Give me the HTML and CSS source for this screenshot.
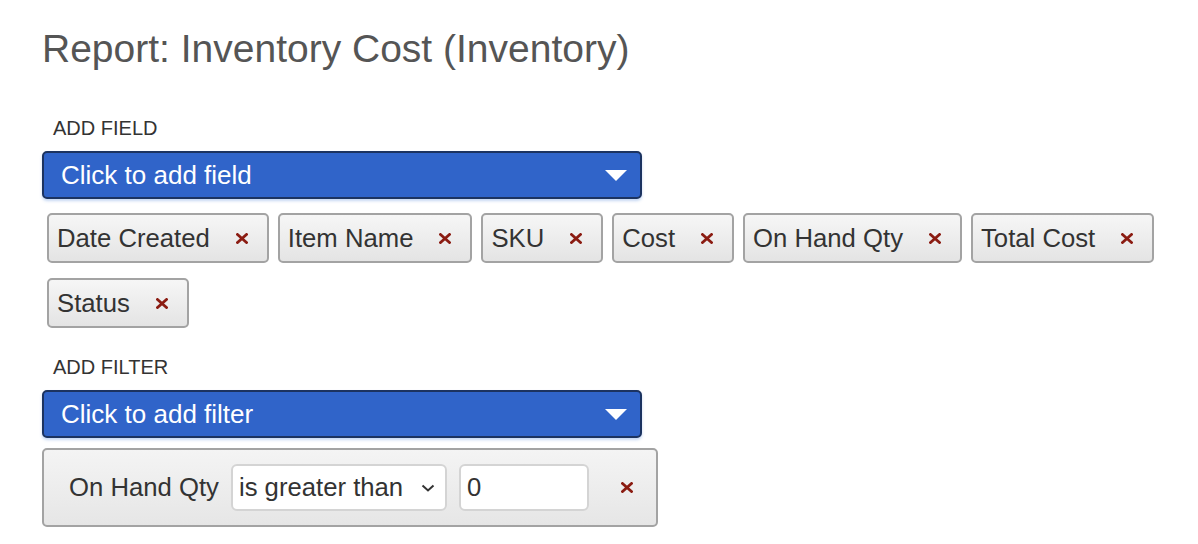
FILE: index.html
```html
<!DOCTYPE html>
<html>
	<head>
		<link rel="stylesheet" href="styles.css">
	</head>
	<body>
		<div class="report">
			<h1 class="title">Report: Inventory Cost (Inventory)</h1>

			<div class="label">ADD FIELD</div>
			<div class="picker">
				<span>Click to add field</span>
				<span class="caret"></span>
			</div>

			<div class="chips">
				<div class="chip">Date Created<svg class="remove" viewBox="0 0 12 11"><path d="M1.5 1.5L10.5 9.5M10.5 1.5L1.5 9.5"/></svg></div>
				<div class="chip">Item Name<svg class="remove" viewBox="0 0 12 11"><path d="M1.5 1.5L10.5 9.5M10.5 1.5L1.5 9.5"/></svg></div>
				<div class="chip">SKU<svg class="remove" viewBox="0 0 12 11"><path d="M1.5 1.5L10.5 9.5M10.5 1.5L1.5 9.5"/></svg></div>
				<div class="chip">Cost<svg class="remove" viewBox="0 0 12 11"><path d="M1.5 1.5L10.5 9.5M10.5 1.5L1.5 9.5"/></svg></div>
				<div class="chip">On Hand Qty<svg class="remove" viewBox="0 0 12 11"><path d="M1.5 1.5L10.5 9.5M10.5 1.5L1.5 9.5"/></svg></div>
				<div class="chip">Total Cost<svg class="remove" viewBox="0 0 12 11"><path d="M1.5 1.5L10.5 9.5M10.5 1.5L1.5 9.5"/></svg></div>
				<div class="chip">Status<svg class="remove" viewBox="0 0 12 11"><path d="M1.5 1.5L10.5 9.5M10.5 1.5L1.5 9.5"/></svg></div>
			</div>

			<div class="label">ADD FILTER</div>
			<div class="picker">
				<span>Click to add filter</span>
				<span class="caret"></span>
			</div>

			<div class="filter">
				<span class="filter-name">On Hand Qty</span>
				<div class="operator">
					<span>is greater than</span>
					<svg class="chevron" viewBox="0 0 14 8"><path d="M1.5 1.5L7 6.5L12.5 1.5"/></svg>
				</div>
				<div class="value">0</div>
				<svg class="remove filter-remove" viewBox="0 0 12 11"><path d="M1.5 1.5L10.5 9.5M10.5 1.5L1.5 9.5"/></svg>
			</div>
		</div>
	</body>
</html>
```

FILE: styles.css
```css
body {
	margin: 0;
	font-family: "Liberation Sans", Arial, sans-serif;
	color: #333;
	background: #fff;
}

.report {
	padding: 27px 0 0 42px;
}

.title {
	margin: 0 0 45px 0;
	font-size: 39px;
	line-height: 44px;
	font-weight: normal;
	color: #555;
}

.label {
	margin-left: 11px;
	font-size: 20px;
	line-height: 24px;
	color: #333;
}

.picker {
	width: 579px;
	height: 44px;
	margin-top: 11px;
	padding-left: 17px;
	display: flex;
	align-items: center;
	justify-content: space-between;
	background-color: #3064c9;
	border: 2px solid #1c3360;
	border-radius: 5px;
	box-shadow: 0 2px 3px rgba(90, 140, 220, 0.35);
	color: #fff;
	font-size: 26px;
}

.caret {
	width: 0;
	height: 0;
	margin-right: 13px;
	border-left: 11px solid transparent;
	border-right: 11px solid transparent;
	border-top: 11px solid #fff;
}

.chips {
	display: flex;
	flex-wrap: wrap;
	gap: 15px 9px;
	width: 1140px;
	margin: 14px 0 0 5px;
}

.chip {
	height: 46px;
	display: flex;
	align-items: center;
	padding: 0 19px 0 8px;
	background: linear-gradient(#f6f6f6, #e4e4e4);
	border: 2px solid #a3a3a3;
	border-radius: 5px;
	font-size: 25.7px;
	color: #333;
	white-space: nowrap;
}

.remove {
	width: 12px;
	height: 11px;
	flex-shrink: 0;
	fill: none;
	stroke: #8b1c12;
	stroke-width: 2.8;
	stroke-linecap: square;
}

.chip .remove {
	margin-left: 26px;
}

.chips + .label {
	margin-top: 27px;
}

.picker + .filter {
	margin-top: 10px;
}

.filter {
	width: 561px;
	display: flex;
	align-items: center;
	padding: 14px 26px 14px 25px;
	background: linear-gradient(#f4f4f4, #e6e6e6);
	border: 2px solid #a3a3a3;
	border-radius: 5px;
	font-size: 25.7px;
	color: #333;
	white-space: nowrap;
}

.filter-name {
	flex-shrink: 0;
	margin-right: 12px;
}

.operator,
.value {
	flex-shrink: 0;
	height: 43px;
	display: flex;
	align-items: center;
	background: #fff;
	border: 2px solid #d4d4d4;
	border-radius: 6px;
}

.operator {
	width: 196px;
	padding: 0 10px 0 6px;
	justify-content: space-between;
	margin-right: 12px;
}

.chevron {
	width: 14px;
	height: 8px;
	fill: none;
	stroke: #333;
	stroke-width: 2;
}

.value {
	width: 120px;
	padding-left: 6px;
}

.filter-remove {
	margin-left: 32px;
}
```
